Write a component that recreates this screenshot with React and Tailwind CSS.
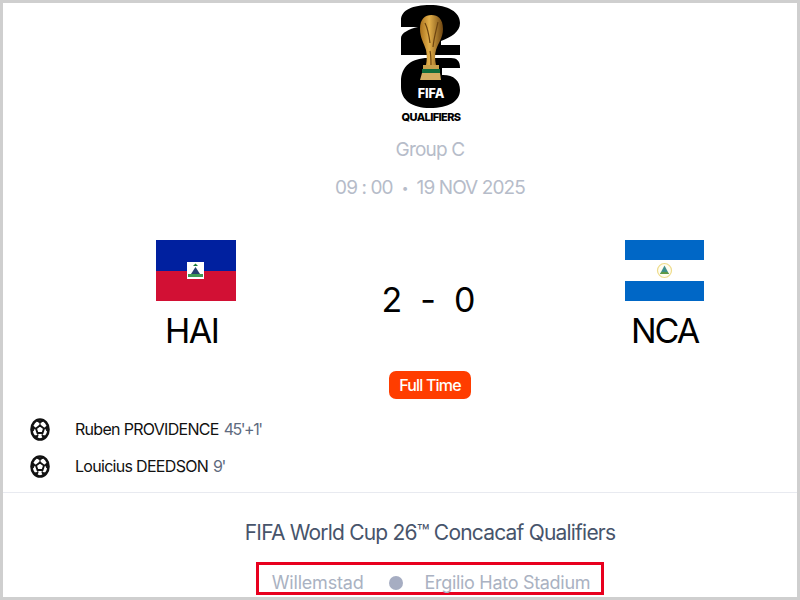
const font = { fontFamily: 'Inter, "Noto Sans", sans-serif' };

const WorldCupLogo = () => (
    <div className="relative w-[60px] h-[120px] ml-[2px]">
        <svg width="60" height="120" viewBox="0 0 60 120">
            <defs>
                <linearGradient id="gold" x1="0" y1="0" x2="1" y2="0">
                    <stop offset="0" stopColor="#a8701c" />
                    <stop offset="0.4" stopColor="#e3b04a" />
                    <stop offset="1" stopColor="#6e4510" />
                </linearGradient>
            </defs>
            <path d="M0 15C0 5 12 0 29 0C47 0 59 7 59 18C59 27 50 32 40 36V40H59V50H0V33C0 28 8 24 17 22H0Z" fill="#000" />
            <path d="M0 76C0 62 10 53 27 53H50C56 53 59 56 59 63H41V70H42C53 70 59 76 59 85C59 96 48 103 29 103C11 103 0 95 0 82Z" fill="#000" />
            <path d="M19 24C19 14 24 10 30.5 10C37 10 42 14 42 24C42 33 37 38 35 45C33.5 50 34 55 35 60H25C26 55 26 50 25 45C23 38 19 33 19 24Z" fill="url(#gold)" />
            <path d="M24 18C27 24 28 30 29 38M37 17C35 26 33 32 32 42M29 46C30 50 30 55 30 60" stroke="#6e4510" strokeWidth="1.2" fill="none" />
            <rect x="22" y="60" width="16" height="4" fill="#c9a04b" />
            <rect x="21" y="64" width="18" height="4" fill="#0f6b3a" />
            <path d="M21 68H39L40 75H19Z" fill="#d2ad62" />
        </svg>
        <span className="absolute left-0 right-0 top-[83px] text-center text-white text-[12.5px] leading-none font-extrabold">FIFA</span>
        <span className="absolute left-[-2px] right-[-2px] top-[107px] text-center text-black text-[11px] leading-none font-extrabold tracking-[-0.6px] whitespace-nowrap">QUALIFIERS</span>
    </div>
);

const BallIcon = () => (
    <svg width="20" height="23" viewBox="0 0 20 23" fill="none">
        <ellipse cx="10" cy="11.5" rx="8.5" ry="10" stroke="#111" strokeWidth="2.6" />
        <path d="M10 7.5L14 10.5L12.5 15H7.5L6 10.5Z" stroke="#111" strokeWidth="1.9" />
        <path d="M7 3L10 5L13 3ZM2.5 8L5 9.5L3 13ZM17.5 8L15 9.5L17 13ZM4.5 18L8 17.5L7 20ZM15.5 18L12 17.5L13 20Z" fill="#111" stroke="#111" strokeWidth="1" />
        <path d="M10 5V7.5M5 9.5L6 10.5M15 9.5L14 10.5M8 17.5L7.5 15M12 17.5L12.5 15" stroke="#111" strokeWidth="1" />
    </svg>
);

const HaitiFlag = () => (
    <div className="relative w-[80px] h-[61px] flex flex-col">
        <div className="flex-1 bg-[#00209f]" />
        <div className="flex-1 bg-[#d21034]" />
        <div className="absolute left-[31px] top-[22px] w-[17px] h-[17px] bg-white">
            <svg width="17" height="17" viewBox="0 0 17 17">
                <path d="M8.5 1.5L11 4H6Z" fill="#1a7a3a" />
                <path d="M4 12L8.5 5L13 12Z" fill="#25406e" />
                <rect x="1" y="12" width="15" height="3" fill="#3f9a55" />
            </svg>
        </div>
    </div>
);

const NicaraguaFlag = () => (
    <div className="relative w-[79px] h-[61px] flex flex-col">
        <div className="flex-1 bg-[#0067c6]" />
        <div className="flex-1 bg-white" />
        <div className="flex-1 bg-[#0067c6]" />
        <div className="absolute left-[31px] top-[22px]">
            <svg width="17" height="17" viewBox="0 0 17 17">
                <circle cx="8.5" cy="8.5" r="7" fill="#fffdf0" stroke="#eedc8c" strokeWidth="1.2" />
                <path d="M8.5 3.5L13 12H4Z" fill="#3f8f8a" />
                <path d="M5.5 10L11.5 10L13 12H4Z" fill="#5f9a45" />
            </svg>
        </div>
    </div>
);

const scorers = [
    { name: 'Ruben PROVIDENCE', time: "45'+1'" },
    { name: 'Louicius DEEDSON', time: "9'" },
];

const App = () => {
    return (
        <div style={font} className="w-[800px] h-[600px] bg-white border-[3px] border-[#cfcfcf] overflow-hidden flex flex-col">
            <div className="pl-[60px] flex flex-col items-center shrink-0">
                <div className="pt-[2px]">
                    <WorldCupLogo />
                </div>
                <div className="mt-[13px] text-[19px] leading-[24px] tracking-[-0.8px] text-[#b6bcc9]">Group C</div>
                <div className="mt-[14px] text-[19px] leading-[24px] tracking-[-0.9px] text-[#b6bcc9] flex items-center gap-[9px]">
                    <span>09 : 00</span>
                    <span className="text-[12px]">•</span>
                    <span>19 NOV 2025</span>
                </div>
            </div>

            <div className="mt-[40px] pl-[153px] pr-[93px] flex justify-between shrink-0">
                <div className="w-[80px]">
                    <HaitiFlag />
                    <div className="mt-[10px] pl-[9px] flex items-center gap-[21px]">
                        <span className="text-[34px] leading-[40px] tracking-[-1.5px] text-black">HAI</span>
                        <span className="w-[10px] h-[10px] rounded-full bg-[#ff3d00]" />
                    </div>
                </div>
                <div className="pt-[40px] pr-[4px]">
                    <div className="text-[34px] leading-[40px] text-black flex gap-[18px]">
                        <span>2</span>
                        <span>-</span>
                        <span>0</span>
                    </div>
                </div>
                <div className="w-[79px] flex flex-col items-center">
                    <NicaraguaFlag />
                    <span className="mt-[10px] text-[34px] leading-[40px] tracking-[-2px] text-black">NCA</span>
                </div>
            </div>

            <div className="pl-[60px] mt-[20px] flex justify-center shrink-0">
                <span className="w-[82px] h-[28px] rounded-[7px] bg-[#ff3d00] text-white text-[16px] tracking-[-0.8px] font-medium flex items-center justify-center">Full Time</span>
            </div>

            <div className="mt-[19px] pl-[27px] flex flex-col gap-[15px] shrink-0">
                {scorers.map((s) => (
                    <div key={s.name} className="flex items-center h-[22px] text-[16px] tracking-[-0.7px]">
                        <BallIcon />
                        <span className="ml-[25px] text-[#111]">{s.name}</span>
                        <span className="ml-[5px] text-[#5f6b80] tracking-[-1.5px]">{s.time}</span>
                    </div>
                ))}
            </div>

            <div className="mt-[15px] border-t border-[#e8eaf0] pl-[60px] flex flex-col items-center shrink-0">
                <div className="mt-[26px] text-[21px] leading-[28px] tracking-[-0.8px] text-[#47546b]">FIFA World Cup 26™ Concacaf Qualifiers</div>
                <div className="mt-[15px] mr-[1px] w-[348px] h-[33px] pl-[3px] border-[3px] border-[#e8001e] flex items-end justify-center text-[18px] leading-[18px] tracking-[-0.2px] text-[#aab2c2]">
                    <span>Willemstad</span>
                    <span className="ml-[26px] mb-[2px] w-[14px] h-[14px] rounded-full bg-[#a6adc2]" />
                    <span className="ml-[21px] tracking-[-0.3px]">Ergilio Hato Stadium</span>
                </div>
            </div>
        </div>
    );
};

export default App;
